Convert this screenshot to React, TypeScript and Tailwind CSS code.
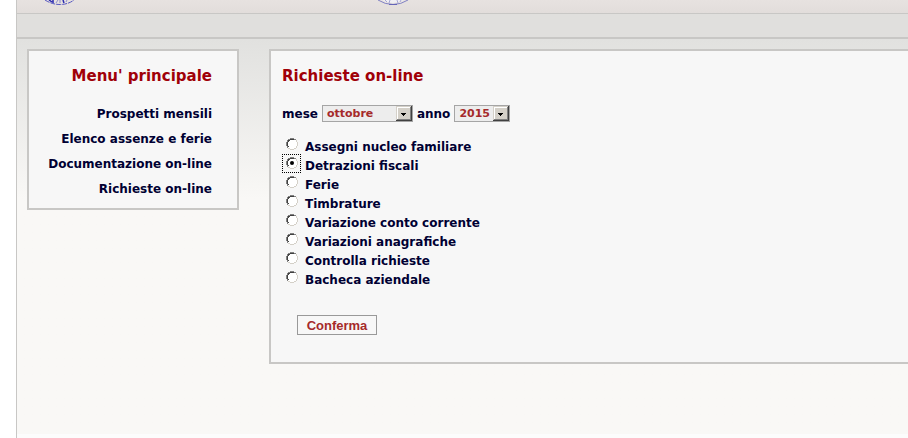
import React from "react";

const menu = ["Prospetti mensili", "Elenco assenze e ferie", "Documentazione on-line", "Richieste on-line"];

const requests = [
  "Assegni nucleo familiare",
  "Detrazioni fiscali",
  "Ferie",
  "Timbrature",
  "Variazione conto corrente",
  "Variazioni anagrafiche",
  "Controlla richieste",
  "Bacheca aziendale",
];

function RadioFace() {
  return (
    <svg viewBox="0 0 12 12" shapeRendering="crispEdges" className="pointer-events-none col-start-1 row-start-1 size-3" aria-hidden="true">
      <path fill="#fff" d="M4 1h4v1h2v2h1v4h-1v2H8v1H4v-1H2V8H1V4h1V2h2z" />
      <path fill="#808080" d="M4 0h4v1H4zM2 1h2v1H2zM8 1h2v1H8zM1 2h1v2H1zM0 4h1v4H0zM1 8h1v2H1z" />
      <path fill="#404040" d="M4 1h4v1H4zM2 2h2v1H2zM2 3h1v1H2zM1 4h1v4H1zM2 8h1v1H2z" />
      <path fill="#d4d0c8" d="M10 2h1v2h-1zM11 4h1v4h-1zM10 8h1v2h-1zM8 10h2v1H8zM4 11h4v1H4zM2 10h2v1H2z" />
    </svg>
  );
}

function Picker({ id, value, options, wide }: { id: string; value: string; options: string[]; wide?: boolean }) {
  return (
    <span className={`grid h-[17px] items-center ${wide ? "w-[91px]" : "w-14"}`}>
      <select
        id={id}
        defaultValue={value}
        className="col-start-1 row-start-1 h-[17px] w-full appearance-none border border-[#a5a5a5] bg-[#ededed] pl-1 text-[11px] leading-none font-bold text-[#a52a2a]"
      >
        {options.map((o) => (
          <option key={o}>{o}</option>
        ))}
      </select>
      <svg viewBox="0 0 16 15" shapeRendering="crispEdges" className="pointer-events-none col-start-1 row-start-1 mr-px h-[15px] w-4 justify-self-end" aria-hidden="true">
        <path fill="#404040" d="M0 0h16v15H0z" />
        <path fill="#d4d0c8" d="M0 0h15v14H0z" />
        <path fill="#808080" d="M1 1h14v13H1z" />
        <path fill="#fff" d="M1 1h13v12H1z" />
        <path fill="#d4d0c8" d="M2 2h12v11H2z" />
        <path fill="#000" d="M5 7h5v1H5zM6 8h3v1H6zM7 9h1v1H7z" />
      </svg>
    </span>
  );
}

function LeftSeal() {
  return (
    <svg viewBox="0 0 32 6" className="h-1.5 w-8" fill="none" stroke="#5555c0" aria-hidden="true">
      <path strokeDasharray="5 1" d="M1 0Q8 4.500 16 4.500T30 0" />
      <path stroke="#2a2ab0" strokeWidth="1.500" d="M5 0l3 2M9 0v3M19 0l1 3" />
      <path stroke="#8d8dd0" d="M12 3l2-3M16 0v3M23 0l-1 2" />
    </svg>
  );
}

function RightSeal() {
  return (
    <svg viewBox="0 0 32 6" className="h-1.5 w-8" fill="none" stroke="#8080c4" aria-hidden="true">
      <path d="M1 0Q8 4.500 16 4.500T31 0" />
      <path fill="#f0eff4" stroke="none" d="M5 0h22q-5 3-11 3T5 0z" />
      <path stroke="#a5a5d4" d="M8 0l2 2M13 0l-1 3M20 0l1 3M24 0l-1 2" />
      <path stroke="#6565b8" d="M12 4.500h8" />
    </svg>
  );
}

export default function App() {
  return (
    <div className="min-h-screen bg-white pl-4 font-['DejaVu_Sans',sans-serif] text-xs font-bold text-[#000033]">
      <div className="flex min-h-screen flex-col overflow-hidden border-l border-[#c8c7c5] bg-[#fcfcfc]">
        <header className="flex h-3.5 items-start gap-[301px] border-b border-[#c8c7c5] bg-linear-to-b from-[#e7e2e0] to-[#e2dddb] pl-[27px]">
          <LeftSeal />
          <RightSeal />
        </header>
        <div className="h-[25px] border-b-2 border-[#c8c7c5] bg-[#e0dfdd]" />
        <div className="mb-1 flex grow items-start gap-[30px] bg-[#f9f8f6] bg-linear-to-b from-[#e1e1df] to-[#f9f8f6] to-[160px] pt-2.5 pl-2.5">
          <nav className="h-[161px] w-[212px] shrink-0 border-2 border-[#c8c7c5] bg-[#f7f7f7] pt-[15px] pr-[25px] text-right">
            <h2 className="text-[15px] leading-5 text-[#a00008]">Menu' principale</h2>
            <ul className="mt-4">
              {menu.map((m) => (
                <li key={m} className="h-[25px] leading-[25px]">
                  <a href="#">{m}</a>
                </li>
              ))}
            </ul>
          </nav>
          <main className="grow border-2 border-r-0 border-[#c8c7c5] bg-[#f7f7f7] pt-[15px] pb-[27px] pl-[11px]">
            <h1 className="text-[15px] leading-5 text-[#a00008]">Richieste on-line</h1>
            <form>
              <div className="mt-[19px] flex h-[17px] items-center gap-1">
                <label htmlFor="mese">mese</label>
                <Picker id="mese" value="ottobre" options={["settembre", "ottobre", "novembre"]} wide />
                <label htmlFor="anno">anno</label>
                <Picker id="anno" value="2015" options={["2014", "2015"]} />
              </div>
              <div className="mt-[13px]">
                {requests.map((r, i) => (
                  <div key={r} className="flex h-[19px] items-start gap-1">
                    <span className="grid size-[19px] content-start justify-start border border-dotted border-transparent pt-0.5 pl-[3px] has-checked:border-black">
                      <RadioFace />
                      <input id={`r${i}`} name="richiesta" type="radio" defaultChecked={i === 1} className="peer col-start-1 row-start-1 size-3 appearance-none outline-none" />
                      <span className="pointer-events-none col-start-1 row-start-1 hidden size-1 place-self-center rounded-full bg-black peer-checked:block" />
                    </span>
                    <label htmlFor={`r${i}`} className="pt-1 leading-4">{r}</label>
                  </div>
                ))}
              </div>
              <button type="button" className="mt-7 ml-[15px] h-5 w-20 border border-[#999] bg-[#f7f7f7] font-['Liberation_Sans',Arial,sans-serif] text-[13px] leading-none font-bold text-[#a52a2a]">
                Conferma
              </button>
            </form>
          </main>
        </div>
      </div>
    </div>
  );
}
